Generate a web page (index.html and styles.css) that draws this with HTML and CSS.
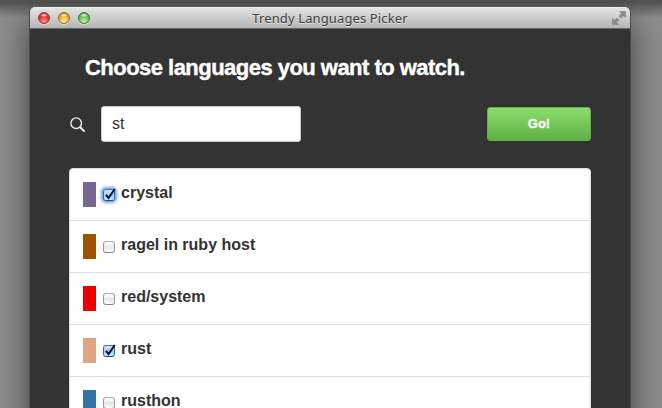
FILE: index.html
```
<!DOCTYPE html>
<html lang="en">
<head>
<meta charset="utf-8">
<title>Trendy Languages Picker</title>
<link rel="stylesheet" href="styles.css">
</head>
<body>
<div class="desktop">
<main class="window">
  <header class="titlebar">
    <div class="lights"><i class="light red"></i><i class="light yellow"></i><i class="light green"></i></div>
    <div class="caption"><span>Trendy Languages Picker</span></div>
    <svg class="expand" width="14" height="14" viewBox="0 0 14 14"><path d="M7.500 0.500h6v6l-1.800-1.800-2.700 2.300-2-2 2.500-2.500zM.5 7.500l1.800 1.800L5 7l2 2-2.500 2.500 2 2h-6z" fill="#8c8c8c" stroke="#777" stroke-width=".5"/></svg>
  </header>
  <section class="content">
    <h1><span>Choose languages you want to watch.</span></h1>
    <form class="search">
      <svg class="glass" width="16" height="16" viewBox="0 0 16 16" fill="none" stroke="#eee"><circle cx="6.200" cy="6.200" r="5.300" stroke-width="1.400"/><path d="M10.200 10.200l3.800 3.800" stroke-width="2" stroke-linecap="round"/></svg>
      <div class="field">st</div>
      <div class="go"><span>Go!</span></div>
    </form>
    <ul class="list">
      <li><i class="swatch crystal"></i><span class="box checked focus"><svg viewBox="0 0 15 15"><path d="M4 7.800l2.500 3.200L12.800 2" /></svg></span><span class="name">crystal</span></li>
      <li><i class="swatch ragel"></i><span class="box"></span><span class="name">ragel in ruby host</span></li>
      <li><i class="swatch redsys"></i><span class="box"></span><span class="name">red/system</span></li>
      <li><i class="swatch rust"></i><span class="box checked"><svg viewBox="0 0 15 15"><path d="M4 7.800l2.500 3.200L12.800 2" /></svg></span><span class="name">rust</span></li>
      <li><i class="swatch rusthon"></i><span class="box"></span><span class="name">rusthon</span></li>
    </ul>
  </section>
</main>
</div>
</body>
</html>
```
FILE: styles.css
```
* { box-sizing: border-box; }
body { margin: 0; font-family: "Liberation Sans", Arial, sans-serif; color: #333; }
.desktop {
  height: 408px;
  overflow: hidden;
  padding: 7px 32px 0 30px;
  background: linear-gradient(#545454, #565656 3px, transparent 18px), #8e8e8e;
}
.window {
  width: 600px;
  height: 480px;
  background: #333;
  border-radius: 5px 5px 0 0;
  box-shadow: -1px 0 #4a4a4a, 1px 0 #4a4a4a, 0 12px 36px rgba(0, 0, 0, .6);
}
.titlebar {
  height: 22px;
  display: grid;
  grid-template-columns: 60px 1fr 60px;
  align-items: center;
  border-radius: 5px 5px 0 0;
  background: linear-gradient(#e4e4e4, #b4b4b4);
  border-top: 1px solid #efefef;
  border-bottom: 1px solid #686868;
}
.lights { display: flex; gap: 8px; padding-left: 8px; }
.light {
  width: 12px;
  height: 12px;
  border-radius: 50%;
  box-shadow: 0 1px 0 rgba(255, 255, 255, .5);
}
.red { background: radial-gradient(ellipse 4px 2px at 50% 22%, #ffe5e5, transparent), radial-gradient(circle at 50% 85%, #ff9a95, #e8343a 50%, #9b1e20 100%); border: 1px solid #9c3030; }
.yellow { background: radial-gradient(ellipse 4px 2px at 50% 22%, #fff5dd, transparent), radial-gradient(circle at 50% 85%, #ffef9a, #edae3b 55%, #9b671e 100%); border: 1px solid #9a6b2b; }
.green { background: radial-gradient(ellipse 4px 2px at 50% 22%, #f0ffed, transparent), radial-gradient(circle at 50% 85%, #c8f7a8, #68bd5c 55%, #31752b 100%); border: 1px solid #417c38; }
.caption {
  text-align: center;
  font: 13px/20px "Noto Sans", sans-serif;
  letter-spacing: .12px;
  color: #404040;
  text-shadow: 0 1px rgba(255, 255, 255, .5);
  white-space: nowrap;
}
.expand { justify-self: end; margin-right: 4px; }
.content { padding: 26px 39px 0 39px; }
h1 {
  margin: 0 0 0 16px;
  font-size: 22px;
  line-height: 26px;
  color: #fff;
  white-space: nowrap;
}
h1 span { letter-spacing: -.53px; -webkit-text-stroke: .4px #fff; }
.search { display: flex; align-items: center; height: 36px; margin: 25px 0 26px; }
.glass { margin: 1px 0 0 1px; }
.field {
  width: 200px;
  height: 36px;
  margin-left: 15px;
  padding: 0 10px;
  border: 1px solid #ccc;
  border-radius: 3px;
  background: #fff;
  font-size: 16px;
  line-height: 34px;
}
.go {
  width: 104px;
  height: 34px;
  margin-left: auto;
  border: 1px solid #60b044;
  border-radius: 3px;
  background: linear-gradient(#8add6d, #60b044);
  color: #fff;
  font-size: 13px;
  font-weight: bold;
  line-height: 32px;
  text-align: center;
}
.go span { -webkit-text-stroke: .3px #fff; }
.list {
  margin: 0;
  padding: 0;
  list-style: none;
  background: #fff;
  border: 1px solid #ddd;
  border-radius: 4px;
}
.list li { display: flex; height: 52px; padding: 13px; border-bottom: 1px solid #ddd; }
.swatch { width: 13px; height: 25px; }
.crystal { background: #776791; }
.ragel { background: #9d5200; }
.redsys { background: #ee0000; }
.rust { background: #dea584; }
.rusthon { background: #3572a5; }
.box {
  width: 12px;
  height: 12px;
  margin: 7px 6px 0 7px;
  border: 1px solid #999;
  border-color: #aaa #999 #888;
  border-radius: 3px;
  background: linear-gradient(#fff, #e8e8e8 50%, #fafafa);
}
.checked { border-color: #58709c #46639a #35487c; background: linear-gradient(#d4e5f8, #a0cbf3 55%, #c4f1ff); }
.focus { box-shadow: 0 0 3px 2px #69a7e5; }
.box svg { display: block; width: 15px; height: 15px; margin: -3px 0 0 -2px; fill: none; stroke: #08152f; stroke-width: 2; overflow: visible; }
.name { font-size: 16px; font-weight: bold; line-height: 22px; }
```
